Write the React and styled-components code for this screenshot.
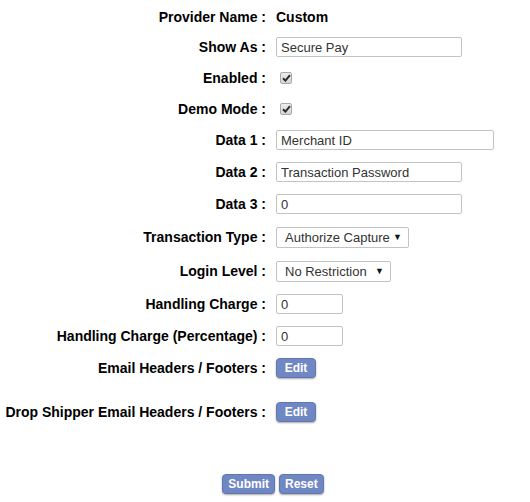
import styled, { createGlobalStyle } from "styled-components";

const GlobalStyle = createGlobalStyle`
  body {
    margin: 0;
    background: #fff;
    font-family: "Liberation Sans", Arial, sans-serif;
  }
`;

const Form = styled.form`
  width: 530px;
  padding-top: 2px;
  display: flex;
  flex-direction: column;
`;

const Row = styled.div`
  display: grid;
  grid-template-columns: 266px 1fr;
  column-gap: 10px;
  align-items: center;
  height: ${(p) => p.$h || 32}px;
  margin-top: ${(p) => p.$mt || 0}px;
`;

const Label = styled.div`
  text-align: right;
  font-size: 14px;
  font-weight: bold;
  color: #000;
  white-space: nowrap;
`;

const Value = styled.div`
  font-size: 14px;
  font-weight: bold;
  color: #000;
`;

const Field = styled.div`
  display: flex;
  align-items: center;
`;

const TextInput = styled.input`
  box-sizing: border-box;
  width: ${(p) => p.$w}px;
  height: 20px;
  border: 1px solid #c3c3c3;
  border-radius: 2px;
  padding: 0 4px;
  font-family: "Liberation Sans", Arial, sans-serif;
  font-size: 13px;
  color: #333;
  outline: none;
`;

const CheckBox = styled.span`
  box-sizing: border-box;
  display: inline-flex;
  align-items: center;
  justify-content: center;
  width: 12px;
  height: 12px;
  margin-left: 4px;
  border: 1px solid #a9a9a9;
  border-radius: 2px;
  background: linear-gradient(#ececec, #d6d6d6);
`;

const SelectWrap = styled.div`
  position: relative;
  width: ${(p) => p.$w}px;
  height: 21px;
`;

const Select = styled.select`
  appearance: none;
  box-sizing: border-box;
  width: 100%;
  height: 100%;
  border: 1px solid #c3c3c3;
  border-radius: 2px;
  background: #fff;
  padding: 0 0 0 8px;
  font-family: "Liberation Sans", Arial, sans-serif;
  font-size: 13px;
  color: #333;
  outline: none;
`;

const Arrow = styled.span`
  position: absolute;
  right: 7px;
  top: 5px;
  font-size: 9px;
  color: #111;
  pointer-events: none;
`;

const Button = styled.button`
  box-sizing: border-box;
  min-width: 40px;
  height: 20px;
  padding: 0 5px;
  border: 1px solid #6177b3;
  border-radius: 4px;
  background: #6f87c3;
  box-shadow: 0 1px 2px rgba(0, 0, 0, 0.35);
  color: #fff;
  font-family: "Liberation Sans", Arial, sans-serif;
  font-size: 12px;
  font-weight: bold;
  cursor: pointer;
`;

const Actions = styled.div`
  display: flex;
  justify-content: center;
  gap: 4px;
  padding-left: 16px;
  margin-top: 40px;
  height: 32px;
  align-items: center;
`;

const Check = () => (
  <CheckBox>
    <svg width="9" height="8" viewBox="0 0 9 8">
      <path d="M1 4.2 L3.4 6.6 L8 1.2" stroke="#2b2b2b" strokeWidth="2" fill="none" />
    </svg>
  </CheckBox>
);

export default function App() {
  return (
    <>
      <GlobalStyle />
      <Form onSubmit={(e) => e.preventDefault()}>
        <Row $h={30}>
          <Label>Provider Name :</Label>
          <Value>Custom</Value>
        </Row>
        <Row $h={30}>
          <Label>Show As :</Label>
          <Field><TextInput $w={186} defaultValue="Secure Pay" /></Field>
        </Row>
        <Row>
          <Label>Enabled :</Label>
          <Field><Check /></Field>
        </Row>
        <Row $h={30}>
          <Label>Demo Mode :</Label>
          <Field><Check /></Field>
        </Row>
        <Row>
          <Label>Data 1 :</Label>
          <Field><TextInput $w={218} defaultValue="Merchant ID" /></Field>
        </Row>
        <Row>
          <Label>Data 2 :</Label>
          <Field><TextInput $w={186} defaultValue="Transaction Password" /></Field>
        </Row>
        <Row>
          <Label>Data 3 :</Label>
          <Field><TextInput $w={186} defaultValue="0" /></Field>
        </Row>
        <Row $h={34}>
          <Label>Transaction Type :</Label>
          <Field>
            <SelectWrap $w={133}>
              <Select defaultValue="ac">
                <option value="ac">Authorize Capture</option>
                <option value="a">Authorize Only</option>
              </Select>
              <Arrow>▼</Arrow>
            </SelectWrap>
          </Field>
        </Row>
        <Row $h={34}>
          <Label>Login Level :</Label>
          <Field>
            <SelectWrap $w={115}>
              <Select defaultValue="none">
                <option value="none">No Restriction</option>
              </Select>
              <Arrow>▼</Arrow>
            </SelectWrap>
          </Field>
        </Row>
        <Row>
          <Label>Handling Charge :</Label>
          <Field><TextInput $w={67} defaultValue="0" /></Field>
        </Row>
        <Row>
          <Label>Handling Charge (Percentage) :</Label>
          <Field><TextInput $w={67} defaultValue="0" /></Field>
        </Row>
        <Row>
          <Label>Email Headers / Footers :</Label>
          <Field><Button type="button">Edit</Button></Field>
        </Row>
        <Row $mt={12}>
          <Label>Drop Shipper Email Headers / Footers :</Label>
          <Field><Button type="button">Edit</Button></Field>
        </Row>
        <Actions>
          <Button type="submit">Submit</Button>
          <Button type="reset">Reset</Button>
        </Actions>
      </Form>
    </>
  );
}
